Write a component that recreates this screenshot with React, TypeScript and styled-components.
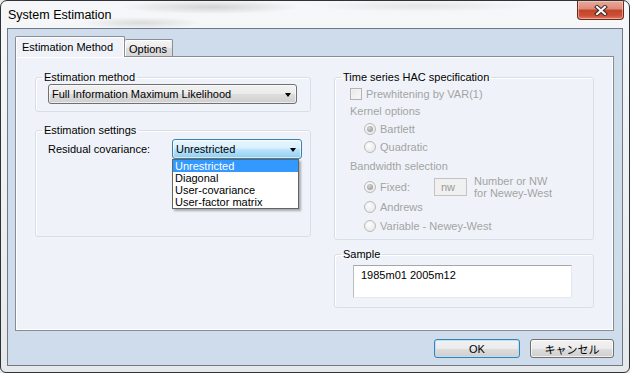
import React from 'react';
import styled, { createGlobalStyle, css } from 'styled-components';

const Global = createGlobalStyle`
  html, body { margin: 0; padding: 0; background: #e8eaec; }
  body { width: 630px; height: 373px; overflow: hidden; font-family: "Liberation Sans", Arial, sans-serif; }
  * { box-sizing: border-box; }
`;

const Window = styled.div`
  width: 630px;
  height: 373px;
  border: 1px solid #2f3236;
  border-radius: 7px 7px 6px 6px;
  background:
    radial-gradient(ellipse 90px 7px at 210px 6px, rgba(120,120,120,0.28), transparent),
    radial-gradient(ellipse 60px 6px at 140px 22px, rgba(120,120,120,0.22), transparent),
    radial-gradient(ellipse 110px 6px at 420px 5px, rgba(120,120,120,0.14), transparent),
    linear-gradient(180deg, #f6f7f8 0%, #eef0f2 50%, #e6e8ea 100%);
  display: flex;
  flex-direction: column;
  overflow: hidden;
`;

const TitleBar = styled.div`
  height: 27px;
  flex: none;
  display: flex;
  justify-content: space-between;
  padding: 0 5px 0 7px;
`;

const Title = styled.div`
  font-family: "Liberation Sans", Arial, sans-serif;
  font-size: 12.5px;
  color: #000;
  line-height: 13px;
  padding-top: 8px;
`;

const CloseButton = styled.div`
  width: 47px;
  height: 19px;
  border: 1px solid #6b2a1e;
  border-top: none;
  border-radius: 0 0 4px 4px;
  background: linear-gradient(180deg, #e9a99b 0%, #dc8a78 45%, #c2432b 50%, #cc4f36 80%, #e07a5e 100%);
  box-shadow: inset 0 0 0 1px rgba(255, 220, 210, 0.5);
  display: flex;
  align-items: center;
  justify-content: center;
`;

const Frame = styled.div`
  flex: 1;
  display: flex;
  padding: 0 6px 6px 6px;
`;

const Client = styled.div`
  flex: 1;
  border: 1px solid #6f7886;
  background: #cfdcec;
  display: flex;
  flex-direction: column;
  padding: 7px 8px 0 7px;
`;

const TabStrip = styled.div`
  height: 20px;
  display: flex;
  align-items: flex-end;
`;

const Tab = styled.div<{ $active?: boolean }>`
  font-size: 11px;
  color: #000;
  border: 1px solid #898c95;
  border-bottom: none;
  border-radius: 2px 2px 0 0;
  display: flex;
  align-items: center;
  ${p => p.$active ? css`
    width: 110px;
    height: 21px;
    margin-bottom: -1px;
    padding-left: 6px;
    background: #eff3f9;
    box-shadow: inset 1px 1px 0 #fff, inset -1px 0 0 #fff;
    position: relative;
    z-index: 1;
  ` : css`
    width: 48px;
    height: 17px;
    padding-left: 4px;
    padding-top: 1px;
    border-left: none;
    background: linear-gradient(180deg, #f4f4f4 0%, #ebebeb 50%, #dedede 51%, #d6d6d6 100%);
    box-shadow: inset 1px 1px 0 #fff;
  `}
`;

const Panel = styled.div`
  height: 275px;
  border: 1px solid #898c95;
  background: #eff3f9;
  box-shadow: inset 1px 1px 0 #fff, inset -1px -1px 0 #fff;
  display: grid;
  grid-template-columns: 276px 260px;
  column-gap: 23px;
  align-items: start;
  padding: 14px 19px 0 19px;
`;

const Column = styled.div`
  display: flex;
  flex-direction: column;
`;

const Group = styled.fieldset<{ $gap?: number }>`
  margin: ${p => p.$gap ?? 0}px 0 0 0;
  padding: 0;
  min-width: 0;
  border: 1px solid #d5dfe5;
  border-radius: 3px;
  box-shadow: inset 1px 1px 0 #fff;
`;

const Legend = styled.legend`
  font-size: 11px;
  line-height: 13px;
  color: #000;
  padding: 0 2px;
  margin-left: 6px;
`;

const GroupBody = styled.div<{ $pad: string; $h?: number }>`
  padding: ${p => p.$pad};
  ${p => p.$h ? css`height: ${p.$h}px;` : ''}
  display: flex;
  flex-direction: column;
`;

const ComboBox = styled.div<{ $w: number; $focused?: boolean }>`
  position: relative;
  width: ${p => p.$w}px;
  height: 20px;
  flex: none;
  border: 1px solid ${p => p.$focused ? '#3c7fb1' : '#707070'};
  border-radius: 3px;
  background: ${p => p.$focused
    ? 'linear-gradient(180deg, #eaf6fd 0%, #d9f0fc 45%, #bee6fd 50%, #8fcdf0 100%)'
    : 'linear-gradient(180deg, #f2f2f2 0%, #ebebeb 50%, #dddddd 51%, #cfcfcf 100%)'};
  box-shadow: inset 0 0 0 1px rgba(255,255,255,0.6);
  display: flex;
  align-items: center;
  justify-content: space-between;
  padding: 0 5px 0 3px;
  font-size: 11px;
  color: #000;
`;

const Arrow = styled.span`
  width: 0;
  height: 0;
  border-left: 3.5px solid transparent;
  border-right: 3.5px solid transparent;
  border-top: 4px solid #000;
  margin-top: 1px;
`;

const DropList = styled.div`
  position: absolute;
  top: 19px;
  left: -1px;
  width: 127px;
  border: 1px solid #646464;
  background: #fff;
  box-shadow: 2px 2px 2px rgba(0,0,0,0.3);
  z-index: 5;
`;

const DropItem = styled.div<{ $selected?: boolean }>`
  height: 12px;
  line-height: 12px;
  font-size: 11px;
  padding-left: 2px;
  color: ${p => p.$selected ? '#fff' : '#000'};
  background: ${p => p.$selected ? '#3399ff' : 'transparent'};
`;

const FieldRow = styled.div`
  display: flex;
  align-items: center;
`;

const FieldLabel = styled.span`
  width: 124px;
  font-size: 11px;
  color: #000;
`;

const OptRow = styled.div<{ $h: number; $indent: number }>`
  height: ${p => p.$h}px;
  padding-left: ${p => p.$indent}px;
  display: flex;
  align-items: center;
  font-size: 11px;
  color: #a3a3a3;
  flex: none;
`;

const CheckBox = styled.span`
  width: 12px;
  height: 12px;
  flex: none;
  border: 1px solid #b3b3b3;
  background: linear-gradient(135deg, #e6e6e6, #fafafa);
  box-shadow: inset 0 0 0 1px #f2f2f2;
  margin-right: 4px;
`;

const Radio = styled.span<{ $checked?: boolean }>`
  width: 12px;
  height: 12px;
  flex: none;
  border-radius: 50%;
  border: 1px solid #b9b9b9;
  background: radial-gradient(circle at 40% 35%, #fdfdfd, #e4e4e4);
  display: flex;
  align-items: center;
  justify-content: center;
  margin-right: 4px;
  &::after {
    content: '';
    width: 6px;
    height: 6px;
    border-radius: 50%;
    background: ${p => p.$checked ? 'radial-gradient(circle at 40% 35%, #d6d6d6, #8a8a8a)' : 'transparent'};
  }
`;

const FixedLabel = styled.span`
  width: 54px;
`;

const SmallInput = styled.div`
  width: 33px;
  height: 18px;
  border: 1px solid #c3c3c3;
  background: #f0f0f0;
  padding-left: 6px;
  display: flex;
  align-items: center;
  color: #9a9a9a;
  font-size: 11px;
`;

const Note = styled.div`
  margin-left: 7px;
  line-height: 12px;
  font-size: 11px;
  color: #a3a3a3;
`;

const TextArea = styled.div`
  width: 219px;
  height: 33px;
  flex: none;
  background: #fff;
  border: 1px solid #e3e9ef;
  border-top-color: #a3a6ab;
  border-left-color: #b9bcc1;
  padding: 3px 0 0 7px;
  font-size: 11px;
  line-height: 13px;
  color: #000;
`;

const ButtonRow = styled.div`
  display: flex;
  justify-content: flex-end;
  gap: 10px;
  padding-top: 8px;
`;

const Button = styled.div<{ $w: number; $default?: boolean }>`
  width: ${p => p.$w}px;
  height: 19px;
  border: 1px solid ${p => p.$default ? '#3c7fb1' : '#707070'};
  border-radius: 3px;
  background: linear-gradient(180deg, #f2f2f2 0%, #ebebeb 50%, #dddddd 51%, #cfcfcf 100%);
  box-shadow: inset 0 0 0 1px ${p => p.$default ? 'rgba(180,225,250,0.9)' : 'rgba(255,255,255,0.7)'};
  display: flex;
  align-items: center;
  justify-content: center;
  font-family: "Liberation Sans", "Noto Sans CJK JP", sans-serif;
  font-size: 11px;
  color: #000;
`;

export default function App() {
  return (
    <>
      <Global />
      <Window>
        <TitleBar>
          <Title>System Estimation</Title>
          <CloseButton>
            <svg width="14" height="11" viewBox="0 0 14 11">
              <path d="M3 2 L11 9 M11 2 L3 9" stroke="#3a2a28" strokeWidth="4" strokeLinecap="square" />
              <path d="M3 2 L11 9 M11 2 L3 9" stroke="#fff" strokeWidth="2" strokeLinecap="square" />
            </svg>
          </CloseButton>
        </TitleBar>
        <Frame>
          <Client>
            <TabStrip>
              <Tab $active>Estimation Method</Tab>
              <Tab>Options</Tab>
            </TabStrip>
            <Panel>
              <Column>
                <Group>
                  <Legend>Estimation method</Legend>
                  <GroupBody $pad="0 13px 7px 12px">
                    <ComboBox $w={249}>
                      <span>Full Information Maximum Likelihood</span>
                      <Arrow />
                    </ComboBox>
                  </GroupBody>
                </Group>
                <Group $gap={12}>
                  <Legend>Estimation settings</Legend>
                  <GroupBody $pad="2px 8px 0 12px" $h={99}>
                    <FieldRow>
                      <FieldLabel>Residual covariance:</FieldLabel>
                      <ComboBox $w={130} $focused>
                        <span>Unrestricted</span>
                        <Arrow />
                        <DropList>
                          <DropItem $selected>Unrestricted</DropItem>
                          <DropItem>Diagonal</DropItem>
                          <DropItem>User-covariance</DropItem>
                          <DropItem>User-factor matrix</DropItem>
                        </DropList>
                      </ComboBox>
                    </FieldRow>
                  </GroupBody>
                </Group>
              </Column>
              <Column>
                <Group>
                  <Legend>Time series HAC specification</Legend>
                  <GroupBody $pad="1px 0 0 0" $h={155}>
                    <OptRow $h={17} $indent={15}><CheckBox />Prewhitening by VAR(1)</OptRow>
                    <OptRow $h={18} $indent={15}>Kernel options</OptRow>
                    <OptRow $h={18} $indent={29}><Radio $checked />Bartlett</OptRow>
                    <OptRow $h={17} $indent={29}><Radio />Quadratic</OptRow>
                    <OptRow $h={21} $indent={15}>Bandwidth selection</OptRow>
                    <OptRow $h={22} $indent={29}>
                      <Radio $checked />
                      <FixedLabel>Fixed:</FixedLabel>
                      <SmallInput>nw</SmallInput>
                      <Note>Number or NW<br />for Newey-West</Note>
                    </OptRow>
                    <OptRow $h={17} $indent={29}><Radio />Andrews</OptRow>
                    <OptRow $h={21} $indent={29}><Radio />Variable - Newey-West</OptRow>
                  </GroupBody>
                </Group>
                <Group $gap={8}>
                  <Legend>Sample</Legend>
                  <GroupBody $pad="4px 0 0 18px" $h={46}>
                    <TextArea>1985m01 2005m12</TextArea>
                  </GroupBody>
                </Group>
              </Column>
            </Panel>
            <ButtonRow>
              <Button $w={86} $default>OK</Button>
              <Button $w={84}>キャンセル</Button>
            </ButtonRow>
          </Client>
        </Frame>
      </Window>
    </>
  );
}
